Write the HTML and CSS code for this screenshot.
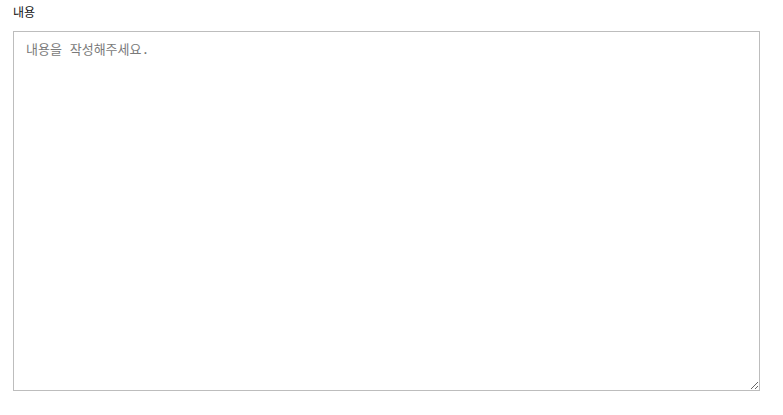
FILE: index.html
```html
<!DOCTYPE html>
<html lang="ko">
<head>
<meta charset="utf-8">
<link rel="stylesheet" href="styles.css">
</head>
<body>
<div class="field">
  <label class="label" for="content">내용</label>
  <textarea id="content" class="content" placeholder="내용을 작성해주세요."></textarea>
</div>
</body>
</html>
```
FILE: styles.css
```css
html, body { margin: 0; padding: 0; background: #fff; }
.field {
  padding: 4px 0 0 13px;
  display: flex;
  flex-direction: column;
}
.label {
  font-family: "Noto Sans CJK KR", "Liberation Sans", sans-serif;
  font-size: 12px;
  line-height: 16px;
  color: #111;
  margin-bottom: 11px;
}
.content {
  box-sizing: border-box;
  width: 747px;
  height: 360px;
  margin: 0;
  border: 1px solid #bdbdbd;
  padding: 9px 12px;
  font-family: "DejaVu Sans Mono", "Noto Sans CJK KR", monospace;
  font-size: 13px;
  line-height: 18px;
  color: #333;
  resize: both;
  outline: none;
}
.content::placeholder { color: #7a7a7a; }
```
